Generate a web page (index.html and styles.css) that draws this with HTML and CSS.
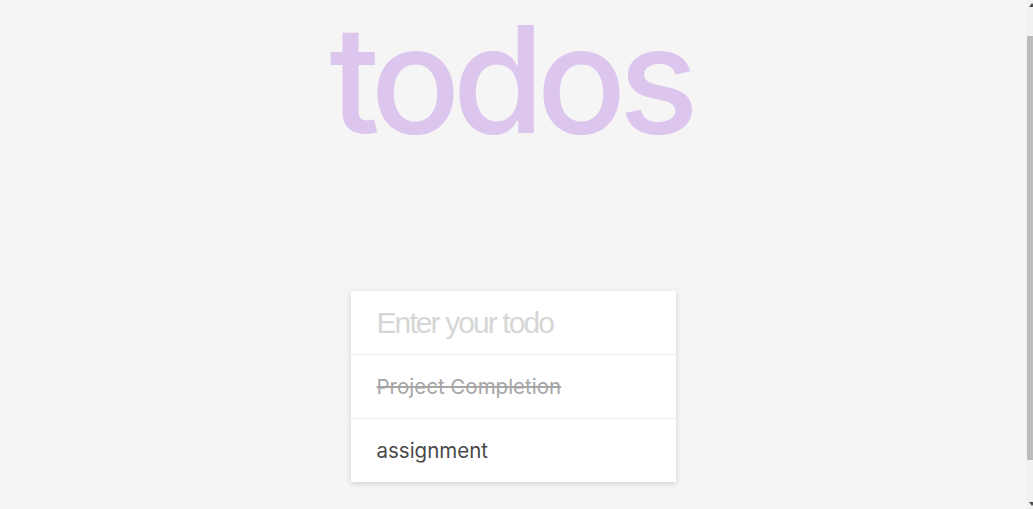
FILE: index.html
```html
<!DOCTYPE html>
<html lang="en">
<head>
<meta charset="utf-8">
<title>todos</title>
<link rel="stylesheet" href="styles.css">
</head>
<body>
<main class="app">
  <h1 class="title">todos</h1>
  <section class="card">
    <input class="new-todo" type="text" placeholder="Enter your todo">
    <ul class="todo-list">
      <li class="todo done">Project Completion</li>
      <li class="todo">assignment</li>
    </ul>
  </section>
</main>
<div class="scrollbar" aria-hidden="true">
  <span class="arrow arrow-up"></span>
  <span class="track"><span class="thumb"></span></span>
  <span class="arrow arrow-down"></span>
</div>
</body>
</html>
```
FILE: styles.css
```css
html {
  height: 100%;
  background: #f5f5f5;
}
body {
  height: 100%;
  margin: 0;
  padding-right: 7px;
  box-sizing: border-box;
  overflow: hidden;
  background: #f5f5f5;
  font-family: "Inter", "Lato", sans-serif;
}
.app {
  display: flex;
  flex-direction: column;
  align-items: center;
}
.title {
  margin: 0;
  height: 291px;
  font-family: "Inter", "Roboto", sans-serif;
  font-weight: 500;
  font-size: 149px;
  line-height: 158px;
  letter-spacing: -8px;
  padding-right: 6px;
  color: #dcc6ee;
}
.card {
  width: 325px;
  background: #fff;
  box-shadow: 0 2px 6px rgba(0, 0, 0, 0.14);
}
.new-todo {
  display: block;
  box-sizing: border-box;
  width: 100%;
  height: 63px;
  margin: 0;
  padding: 0 26px;
  border: 0;
  outline: none;
  background: transparent;
  font-family: "Liberation Sans", Arial, sans-serif;
  font-size: 30px;
  letter-spacing: -1.9px;
  color: #333;
}
.new-todo::placeholder {
  color: #d6d6d6;
}
.todo-list {
  list-style: none;
  margin: 0;
  padding: 0;
}
.todo {
  height: 63px;
  border-top: 1px solid #ededed;
  padding: 0 26px;
  display: flex;
  align-items: center;
  font-size: 20.5px;
  color: #4a4a4a;
}
.todo.done {
  color: #a6a6a6;
  text-decoration: line-through;
}
.scrollbar {
  position: fixed;
  top: 0;
  right: 0;
  bottom: 0;
  width: 7px;
  display: flex;
  flex-direction: column;
  background: #f1f1f1;
}
.arrow {
  flex: 0 0 auto;
  height: 0;
  width: 0;
  margin-left: 3px;
  border-left: 3px solid transparent;
  border-right: 3px solid transparent;
}
.arrow-up {
  margin-top: 3px;
  border-bottom: 4px solid #505050;
}
.arrow-down {
  margin-bottom: 3px;
  border-top: 4px solid #505050;
}
.track {
  flex: 1;
  padding-top: 29px;
}
.thumb {
  display: block;
  margin-left: 1px;
  height: 424px;
  background: #bdbdbd;
}
```
